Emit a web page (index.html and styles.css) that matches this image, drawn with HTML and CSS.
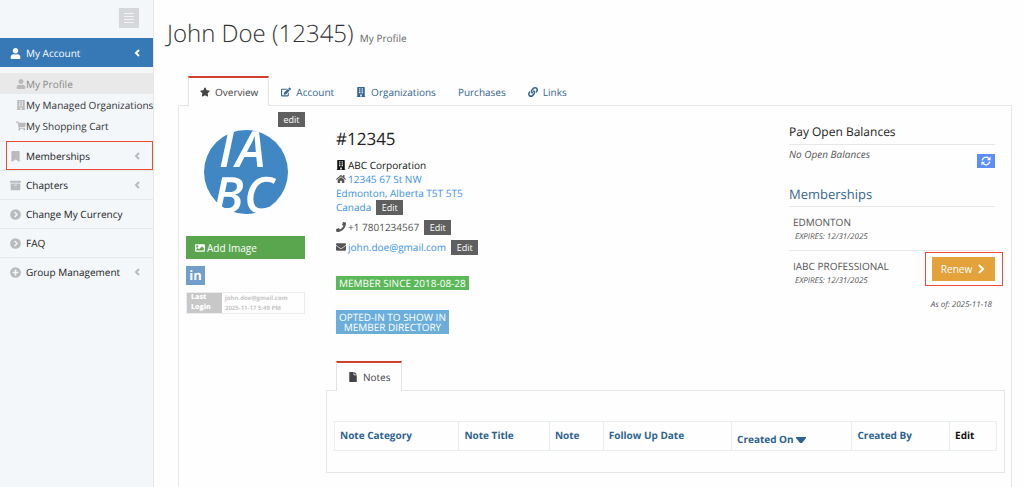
FILE: index.html
```html
<!DOCTYPE html>
<html lang="en">
<head>
  <meta charset="UTF-8">
  <meta name="viewport" content="width=device-width, initial-scale=1">
  <title>My Profile</title>
  <link rel="stylesheet" href="styles.css">
</head>
<body>

  <!-- Shared icons -->
  <svg class="sprite" aria-hidden="true">
    <symbol id="user" viewBox="0 0 448 512"><path d="M224 256c70.7 0 128-57.3 128-128S294.7 0 224 0 96 57.3 96 128s57.3 128 128 128zm89.6 32h-16.7c-22.2 10.2-46.9 16-72.9 16s-50.6-5.8-72.9-16h-16.7C60.2 288 0 348.2 0 422.4V464c0 26.5 21.5 48 48 48h352c26.5 0 48-21.5 48-48v-41.6c0-74.2-60.2-134.4-134.4-134.4z"/></symbol>
    <symbol id="building" viewBox="0 0 448 512"><path fill-rule="evenodd" d="M436 480h-20V24c0-13-11-24-24-24H56C43 0 32 11 32 24v456H12c-7 0-12 5-12 12v20h448v-20c0-7-5-12-12-12zM128 64h64v64h-64zM256 64h64v64h-64zM128 160h64v64h-64zM256 160h64v64h-64zM128 256h64v64h-64zM256 256h64v64h-64zM184 384h80v96h-80z"/></symbol>
    <symbol id="cart" viewBox="0 0 576 512"><path d="M528.12 301.319l47.273-208C578.806 78.301 567.391 64 551.99 64H159.208l-9.166-44.81C147.758 8.021 137.93 0 126.529 0H24C10.745 0 0 10.745 0 24v16c0 13.255 10.745 24 24 24h69.883l70.248 343.435C147.325 417.1 136 435.222 136 456c0 30.928 25.072 56 56 56s56-25.072 56-56c0-15.674-6.447-29.835-16.824-40h209.647C430.447 426.165 424 440.326 424 456c0 30.928 25.072 56 56 56s56-25.072 56-56c0-22.172-12.888-41.332-31.579-50.405l5.517-24.276c3.413-15.018-8.002-29.319-23.403-29.319H218.117l-6.545-32h293.145c11.206 0 20.92-7.754 23.403-18.681z"/></symbol>
    <symbol id="bookmark" viewBox="0 0 384 512"><path d="M0 512V48C0 21.49 21.49 0 48 0h288c26.51 0 48 21.49 48 48v464L192 400 0 512z"/></symbol>
    <symbol id="archive" viewBox="0 0 512 512"><path d="M32 448c0 17.7 14.3 32 32 32h384c17.7 0 32-14.3 32-32V160H32v288zm160-212c0-6.6 5.4-12 12-12h104c6.6 0 12 5.4 12 12v8c0 6.6-5.4 12-12 12H204c-6.6 0-12-5.4-12-12v-8zM480 32H32C14.3 32 0 46.3 0 64v48c0 8.8 7.2 16 16 16h480c8.8 0 16-7.2 16-16V64c0-17.7-14.3-32-32-32z"/></symbol>
    <symbol id="circle-right" viewBox="0 0 512 512"><circle cx="256" cy="256" r="250"/><path d="M215 140l115 116-115 116" fill="none" stroke="#f3f7fa" stroke-width="64"/></symbol>
    <symbol id="circle-plus" viewBox="0 0 512 512"><circle cx="256" cy="256" r="250"/><path d="M256 120v272M120 256h272" fill="none" stroke="#f3f7fa" stroke-width="76"/></symbol>
    <symbol id="left" viewBox="0 0 10 12"><path d="M7 3L4 6l3 3" fill="none" stroke="currentColor" stroke-width="2"/></symbol>
    <symbol id="right" viewBox="0 0 10 10"><path d="M3 1l4 4-4 4" fill="none" stroke="currentColor" stroke-width="2"/></symbol>
    <symbol id="star" viewBox="0 0 576 512"><path d="M259.3 17.8L194 150.2 47.9 171.5c-26.2 3.8-36.7 36.1-17.7 54.6l105.7 103-25 145.5c-4.5 26.3 23.2 46 46.4 33.7L288 439.6l130.7 68.7c23.2 12.2 50.9-7.4 46.4-33.7l-25-145.5 105.7-103c19-18.5 8.5-50.8-17.7-54.6L382 150.2 316.7 17.8c-11.7-23.6-45.6-23.9-57.4 0z"/></symbol>
    <symbol id="edit" viewBox="0 0 576 512"><path d="M402.6 83.2l90.2 90.2c3.8 3.8 3.8 10 0 13.8L274.4 405.6l-92.8 10.3c-12.4 1.4-22.9-9.1-21.5-21.5l10.3-92.8L388.8 83.2c3.8-3.8 10-3.8 13.8 0zm162-22.9l-48.8-48.8c-15.2-15.2-39.9-15.2-55.2 0l-35.4 35.4c-3.8 3.8-3.8 10 0 13.8l90.2 90.2c3.8 3.8 10 3.8 13.8 0l35.4-35.4c15.2-15.3 15.2-40 0-55.2zM384 346.2V448H64V128h229.8c3.2 0 6.2-1.3 8.5-3.5l40-40c7.6-7.6 2.2-20.5-8.5-20.5H48C21.5 64 0 85.5 0 112v352c0 26.5 21.5 48 48 48h352c26.5 0 48-21.5 48-48V306.2c0-10.7-12.9-16-20.5-8.5l-40 40c-2.2 2.3-3.5 5.3-3.5 8.5z"/></symbol>
    <symbol id="link" viewBox="0 0 512 512"><path d="M326.612 185.391c59.747 59.809 58.927 155.698.36 214.59-.11.12-.24.25-.36.37l-67.2 67.2c-59.27 59.27-155.699 59.262-214.96 0-59.27-59.26-59.27-155.7 0-214.96l37.106-37.106c9.84-9.84 26.786-3.3 27.294 10.606.648 17.722 3.826 35.527 9.69 52.721 1.986 5.822.567 12.262-3.783 16.612l-13.087 13.087c-28.026 28.026-28.905 73.66-1.155 101.96 28.024 28.579 74.086 28.749 102.325.51l67.2-67.19c28.191-28.191 28.073-73.757 0-101.83-3.701-3.694-7.429-6.564-10.341-8.569a16.037 16.037 0 0 1-6.947-12.606c-.396-10.567 3.348-21.456 11.698-29.806l21.054-21.055c5.521-5.521 14.182-6.199 20.584-1.731a152.482 152.482 0 0 1 20.522 17.197zM467.547 44.449c-59.261-59.262-155.69-59.27-214.96 0l-67.2 67.2c-.12.12-.25.25-.36.37-58.566 58.892-59.387 154.781.36 214.59a152.454 152.454 0 0 0 20.521 17.196c6.402 4.468 15.064 3.789 20.584-1.731l21.054-21.055c8.35-8.35 12.094-19.239 11.698-29.806a16.037 16.037 0 0 0-6.947-12.606c-2.912-2.005-6.64-4.875-10.341-8.569-28.073-28.073-28.191-73.639 0-101.83l67.2-67.19c28.239-28.239 74.3-28.069 102.325.51 27.75 28.3 26.872 73.934-1.155 101.96l-13.087 13.087c-4.35 4.35-5.769 10.79-3.783 16.612 5.864 17.194 9.042 34.999 9.69 52.721.509 13.906 17.454 20.446 27.294 10.606l37.106-37.106c59.271-59.259 59.271-155.699.001-214.959z"/></symbol>
    <symbol id="image" viewBox="0 0 512 512"><path d="M464 448H48c-26.51 0-48-21.49-48-48V112c0-26.51 21.49-48 48-48h416c26.51 0 48 21.49 48 48v288c0 26.51-21.49 48-48 48zM112 120c-30.928 0-56 25.072-56 56s25.072 56 56 56 56-25.072 56-56-25.072-56-56-56zM64 384h384V272l-87.515-87.515c-4.686-4.686-12.284-4.686-16.971 0L208 320l-55.515-55.515c-4.686-4.686-12.284-4.686-16.971 0L64 336v48z" fill-rule="evenodd"/></symbol>
    <symbol id="home" viewBox="0 0 576 512"><path d="M280.37 148.26L96 300.11V464a16 16 0 0 0 16 16l112.06-.29a16 16 0 0 0 15.92-16V368a16 16 0 0 1 16-16h64a16 16 0 0 1 16 16v95.64a16 16 0 0 0 16 16.05L464 480a16 16 0 0 0 16-16V300L295.67 148.26a12.19 12.19 0 0 0-15.3 0zM571.6 251.47L488 182.56V44.05a12 12 0 0 0-12-12h-56a12 12 0 0 0-12 12v72.61L318.47 43a48 48 0 0 0-61 0L4.34 251.47a12 12 0 0 0-1.6 16.9l25.5 31A12 12 0 0 0 45.15 301l235.22-193.74a12.19 12.19 0 0 1 15.3 0L530.9 301a12 12 0 0 0 16.9-1.6l25.5-31a12 12 0 0 0-1.7-16.93z"/></symbol>
    <symbol id="phone" viewBox="0 0 512 512"><path d="M493.4 24.6l-104-24c-11.3-2.6-22.9 3.3-27.5 13.9l-48 112c-4.2 9.8-1.4 21.3 6.9 28l60.6 49.6c-36 76.7-98.9 140.5-177.2 177.2l-49.6-60.6c-6.8-8.3-18.2-11.1-28-6.9l-112 48C3.9 366.5-2 378.1.6 389.4l24 104C27.1 504.2 36.7 512 48 512c256.1 0 464-207.5 464-464 0-11.2-7.7-20.9-18.6-23.4z"/></symbol>
    <symbol id="mail" viewBox="0 0 512 512"><path d="M502.3 190.8c3.9-3.1 9.7-.2 9.7 4.7V400c0 26.5-21.5 48-48 48H48c-26.5 0-48-21.5-48-48V195.6c0-5 5.7-7.8 9.7-4.7 22.4 17.4 52.1 39.5 154.1 113.6 21.1 15.4 56.7 47.8 92.2 47.6 35.7.3 72-32.8 92.3-47.6 102-74.1 131.6-96.3 154-113.7zM256 320c23.2.4 56.6-29.2 73.4-41.4 132.7-96.3 142.8-104.7 173.4-128.7 5.8-4.5 9.2-11.5 9.2-18.9v-19c0-26.5-21.5-48-48-48H48c-26.5 0-48 21.5-48 48v19c0 7.4 3.4 14.3 9.2 18.9 30.6 23.9 40.7 32.4 173.4 128.7 16.8 12.2 50.2 41.8 73.4 41.4z"/></symbol>
    <symbol id="file" viewBox="0 0 384 512"><path d="M224 136V0H24C10.7 0 0 10.7 0 24v464c0 13.3 10.7 24 24 24h336c13.3 0 24-10.7 24-24V160H248c-13.2 0-24-10.8-24-24zm160-14.1v6.1H256V0h6.1c6.4 0 12.5 2.5 17 7l97.9 98c4.5 4.5 7 10.6 7 16.9z"/></symbol>
    <symbol id="sync" viewBox="0 0 512 512"><path d="M62 225A198 198 0 0 1 400 125M450 287A198 198 0 0 1 112 387" fill="none" stroke="currentColor" stroke-width="66"/><path d="M490 30v190H300zM22 482V292h190z"/></symbol>
  </svg>

  <div class="layout">
    <aside class="sidebar">
      <button class="toggler" type="button" aria-label="Toggle menu"><span></span><span></span><span></span><span></span></button>
      <nav>
        <a class="nav-item active" href="#"><svg class="icon"><use href="#user"/></svg>My Account<svg class="arrow"><use href="#left"/></svg></a>
        <div class="submenu">
          <a class="current" href="#"><svg class="icon"><use href="#user"/></svg>My Profile</a>
          <a href="#"><svg class="icon"><use href="#building"/></svg>My Managed Organizations</a>
          <a href="#"><svg class="icon"><use href="#cart"/></svg>My Shopping Cart</a>
        </div>
        <a class="nav-item marked" href="#"><svg class="icon"><use href="#bookmark"/></svg>Memberships<svg class="arrow"><use href="#left"/></svg></a>
        <a class="nav-item" href="#"><svg class="icon"><use href="#archive"/></svg>Chapters<svg class="arrow"><use href="#left"/></svg></a>
        <a class="nav-item" href="#"><svg class="icon"><use href="#circle-right"/></svg>Change My Currency</a>
        <a class="nav-item" href="#"><svg class="icon"><use href="#circle-right"/></svg>FAQ</a>
        <a class="nav-item" href="#"><svg class="icon"><use href="#circle-plus"/></svg>Group Management<svg class="arrow"><use href="#left"/></svg></a>
      </nav>
    </aside>

    <main class="main">
      <h1>John Doe (12345) <small>My Profile</small></h1>

      <div class="tabs">
        <a class="tab selected" href="#"><svg class="icon"><use href="#star"/></svg>Overview</a>
        <a class="tab" href="#"><svg class="icon"><use href="#edit"/></svg>Account</a>
        <a class="tab" href="#"><svg class="icon"><use href="#building"/></svg>Organizations</a>
        <a class="tab" href="#">Purchases</a>
        <a class="tab" href="#"><svg class="icon"><use href="#link"/></svg>Links</a>
      </div>

      <div class="panel">
        <section class="picture">
          <button class="btn-edit" type="button">edit</button>
          <svg class="logo" viewBox="0 0 84 84" role="img" aria-label="IABC">
            <circle cx="42" cy="42" r="42"/>
            <text x="15" y="37">I</text>
            <text x="32" y="37">A</text>
            <text x="9" y="83">B</text>
            <text x="40" y="83">C</text>
          </svg>
          <button class="btn-image" type="button"><svg class="icon"><use href="#image"/></svg>Add Image</button>
          <a class="linkedin" href="#">in</a>
          <div class="login">
            <strong>Last Login</strong>
            <span>john.doe@gmail.com<br>2025-11-17 5:49 PM</span>
          </div>
        </section>

        <div class="content">
          <div class="overview">
            <section class="details">
              <h2>#12345</h2>
              <div class="line company"><svg class="icon"><use href="#building"/></svg>ABC Corporation</div>
              <div class="line"><svg class="icon"><use href="#home"/></svg><a href="#">12345 67 St NW</a></div>
              <div class="line"><a href="#">Edmonton, Alberta T5T 5T5</a></div>
              <div class="line"><a href="#">Canada</a><button class="btn-edit" type="button">Edit</button></div>
              <div class="line contact"><svg class="icon"><use href="#phone"/></svg>+1 7801234567<button class="btn-edit" type="button">Edit</button></div>
              <div class="line contact"><svg class="icon"><use href="#mail"/></svg><a href="#">john.doe@gmail.com</a><button class="btn-edit" type="button">Edit</button></div>
              <div class="badge since">MEMBER SINCE 2018-08-28</div>
              <div class="badge opted">OPTED-IN TO SHOW IN<br>MEMBER DIRECTORY</div>
            </section>

            <section class="summary">
              <h3>Pay Open Balances</h3>
              <div class="balances">
                <em>No Open Balances</em>
                <button class="btn-sync" type="button" aria-label="Refresh balances"><svg class="icon"><use href="#sync"/></svg></button>
              </div>
              <h3 class="blue">Memberships</h3>
              <div class="membership">
                <div>EDMONTON<em>EXPIRES: 12/31/2025</em></div>
              </div>
              <div class="membership">
                <div>IABC PROFESSIONAL<em>EXPIRES: 12/31/2025</em></div>
                <button class="btn-renew" type="button">Renew<svg class="icon"><use href="#right"/></svg></button>
              </div>
              <em class="as-of">As of: 2025-11-18</em>
            </section>
          </div>

          <div class="tabs notes-tabs">
            <a class="tab selected" href="#"><svg class="icon"><use href="#file"/></svg>Notes</a>
          </div>
          <div class="notes">
            <table>
              <thead>
                <tr>
                  <th class="col-category"><a href="#">Note Category</a></th>
                  <th class="col-title"><a href="#">Note Title</a></th>
                  <th class="col-note"><a href="#">Note</a></th>
                  <th class="col-follow"><a href="#">Follow Up Date</a></th>
                  <th class="col-created sorted"><a href="#">Created On <svg viewBox="0 0 10 6"><path d="M0 0h10v1L6 6H4L0 1z"/></svg></a></th>
                  <th class="col-by"><a href="#">Created By</a></th>
                  <th class="col-edit">Edit</th>
                </tr>
              </thead>
            </table>
          </div>
        </div>
      </div>
    </main>
  </div>

</body>
</html>
```

FILE: styles.css
```css
* {
  box-sizing: border-box;
}
body {
  margin: 0;
  font-family: "Open Sans", "Noto Sans", sans-serif;
  font-size: 10px;
  line-height: 14px;
  text-rendering: geometricPrecision;
  color: #555;
  background: #fefefe;
}
a {
  color: #3d93e8;
  text-decoration: none;
}
h1, h2, h3 {
  margin: 0;
  font-weight: 400;
}
button {
  font: inherit;
  color: #fff;
  border: none;
  padding: 0;
  cursor: pointer;
}
svg {
  fill: currentColor;
  flex: none;
}
.sprite {
  display: none;
}
.icon {
  width: 10px;
  height: 10px;
}
.layout {
  display: flex;
  min-height: 100vh;
}

/* Sidebar */
.sidebar {
  width: 154px;
  flex: none;
  background: #f3f7fa;
  border-right: 1px solid #e4e6e8;
}
.toggler {
  display: flex;
  flex-direction: column;
  justify-content: center;
  gap: 2px;
  width: 20px;
  height: 20px;
  margin: 8px 14px 10px auto;
  padding: 0 5px;
  background: #d5d7da;
}
.toggler span {
  height: 1px;
  background: #f3f3f3;
}
.nav-item {
  position: relative;
  display: flex;
  align-items: center;
  height: 29px;
  padding: 0 11px 0 10px;
  color: #222;
  border-top: 1px solid #e6e8ea;
}
.nav-item .icon {
  width: 11px;
  height: 11px;
  margin-right: 5px;
  color: #b9babc;
}
.nav-item .arrow {
  width: 10px;
  height: 12px;
  margin-left: auto;
  color: #b9babc;
}
.nav-item.active {
  color: #fff;
  background: #3679b6;
  border-color: #3679b6;
}
.nav-item.active .icon, .nav-item.active .arrow {
  color: #fff;
}
.nav-item.marked::after {
  content: "";
  position: absolute;
  inset: -1px 0 0 6px;
  border: 1px solid #ef4b32;
}
.submenu {
  padding: 6px 0 5px;
}
.submenu a {
  display: flex;
  align-items: center;
  height: 21px;
  padding-left: 16px;
  color: #333;
  white-space: nowrap;
}
.submenu .icon {
  color: #b9babc;
}
.submenu .current {
  color: #888;
  background: #e9e9e9;
}

/* Main area */
.main {
  display: flex;
  flex-direction: column;
  flex: 1;
  padding: 0 12px 0 24px;
}
h1 {
  margin: 16px 0 24px -11px;
  font-size: 24px;
  font-weight: 300;
  line-height: 36px;
  height: 36px;
  color: #333;
}
h1 small {
  font-size: 10px;
  font-weight: 400;
  line-height: 14px;
  color: #666;
}
.tabs {
  display: flex;
  gap: 1px;
  margin: 0 10px -1px;
}
.tab {
  position: relative;
  display: flex;
  align-items: center;
  height: 30px;
  padding: 2px 10px 0 11px;
  color: #33658f;
}
.tab .icon {
  margin-right: 5px;
}
.tab.selected {
  color: #444;
  background: #fefefe;
  border: 1px solid #e3e3e3;
  border-top: 2px solid #d0402f;
  border-bottom: none;
  padding-top: 0;
}
.panel {
  display: flex;
  flex: 1;
  gap: 21px;
  padding: 6px 6px 0 7px;
  border: 1px solid #e6e6e6;
  border-bottom: none;
}
.picture {
  display: flex;
  flex-direction: column;
  width: 119px;
  flex: none;
}
.btn-edit {
  width: 27px;
  height: 15px;
  font-size: 9px;
  line-height: 15px;
  background: #5f5f5f;
}
.picture .btn-edit {
  align-self: flex-end;
}
.logo {
  width: 84px;
  height: 84px;
  margin: 3px auto 22px;
  fill: #4187c4;
}
.logo text {
  font-family: "Open Sans", sans-serif;
  font-size: 50px;
  font-style: italic;
  font-weight: 600;
  fill: #fefefe;
}
.btn-image {
  display: flex;
  align-items: center;
  height: 23px;
  padding-left: 9px;
  background: #5aa64f;
}
.btn-image .icon {
  margin-right: 2px;
}
.linkedin {
  width: 19px;
  height: 19px;
  margin: 7px 0;
  font-size: 13px;
  font-weight: 700;
  line-height: 18px;
  text-align: center;
  color: #fff;
  background: #719fca;
}
.login {
  display: flex;
  height: 22px;
  font-size: 7px;
  font-weight: 700;
  line-height: 10px;
  color: #c6c6c6;
  border: 1px solid #ececf0;
  white-space: nowrap;
}
.login strong {
  width: 35px;
  padding-left: 4px;
  color: #fff;
  background: #c8c8c8;
  white-space: normal;
}
.login span {
  padding-left: 3px;
  font-size: 6px;
}
.content {
  flex: 1;
  min-width: 0;
}
.overview {
  display: flex;
  justify-content: space-between;
  padding: 7px 10px 0;
}
h2 {
  margin: 8px 0 7px;
  font-size: 17px;
  line-height: 24px;
  color: #222;
}
.line {
  display: flex;
  align-items: center;
  height: 14px;
}
.line .icon {
  margin-right: 2px;
}
.line .btn-edit {
  margin-left: 5px;
}
.company {
  color: #111;
}
.contact {
  margin-top: 6px;
}
.badge {
  width: fit-content;
  padding: 2px 3px;
  line-height: 10px;
  text-align: center;
  color: #fff;
}
.since {
  margin-top: 22px;
  background: #5cb95a;
}
.opted {
  margin-top: 20px;
  background: #6caedb;
}

/* Balances and memberships */
.summary {
  width: 206px;
}
h3 {
  padding: 4px 0 3px;
  font-size: 12px;
  line-height: 18px;
  color: #222;
  border-bottom: 1px solid #e8e8e8;
}
h3.blue {
  font-size: 13px;
  color: #33658f;
}
.balances {
  display: flex;
  justify-content: space-between;
  height: 36px;
  padding-top: 2px;
}
.btn-sync {
  width: 18px;
  height: 14px;
  margin-top: 7px;
  background: #5b8ff5;
}
.btn-sync .icon {
  display: block;
  margin: 0 auto;
}
.membership {
  display: flex;
  align-items: flex-start;
  justify-content: space-between;
  height: 43px;
  padding: 6px 0 0 4px;
}
.membership div {
  padding-top: 2px;
}
.membership + .membership {
  border-top: 1px solid #e8e8e8;
}
.membership em {
  display: block;
  padding-left: 2px;
  font-size: 8px;
  line-height: 16px;
}
.btn-renew {
  position: relative;
  display: flex;
  align-items: center;
  justify-content: center;
  gap: 4px;
  width: 63px;
  height: 24px;
  background: #e3a33a;
}
.btn-renew::after {
  content: "";
  position: absolute;
  inset: -5px -8px -5px -7px;
  border: 1px solid #ef4b32;
}
.as-of {
  display: block;
  padding: 5px 3px 0 0;
  font-size: 8px;
  text-align: right;
}

/* Notes */
.notes-tabs {
  margin-top: 27px;
}
.notes {
  padding: 30px 7px 21px;
  border: 1px solid #e6e6e6;
}
table {
  width: 100%;
  border-collapse: collapse;
}
th {
  height: 29px;
  padding: 0 5px 2px;
  text-align: left;
  color: #111;
  border: 1px solid #e8eef4;
}
th a {
  color: #2d6391;
}
th svg {
  width: 10px;
  height: 6px;
}
.sorted {
  padding: 6px 5px 0;
}
.col-category {
  width: 125px;
}
.col-title {
  width: 91px;
}
.col-note {
  width: 54px;
}
.col-follow {
  width: 129px;
}
.col-created {
  width: 121px;
}
.col-by {
  width: 98px;
}
.col-edit {
  width: 47px;
}
```
